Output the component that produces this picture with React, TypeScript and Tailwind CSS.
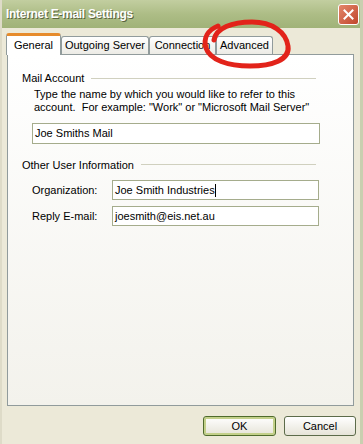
import React from 'react';

const font = { fontFamily: '"Liberation Sans", Arial, sans-serif' };

const Tab = ({ label, width, active = false }: { label: string; width: number; active?: boolean }) => (
  <div
    style={{ width }}
    className={
      active
        ? 'relative z-10 -mb-px h-[22px] bg-white border border-b-0 border-[#919b9c] rounded-t-[3px] border-t-[3px] border-t-[#e68b2c] flex items-center justify-center text-[11px] text-black'
        : 'h-[18px] bg-gradient-to-b from-white to-[#ecebe5] border border-b-0 border-[#919b9c] rounded-t-[3px] flex items-center justify-center text-[11px] text-black'
    }
  >
    {label}
  </div>
);

const Field = ({ value, caret = false, className = '' }: { value: string; caret?: boolean; className?: string }) => (
  <div className={`h-[20px] bg-white border border-[#a5ac8c] flex items-center px-[2px] text-[11px] text-black ${className}`}>
    <span>{value}</span>
    {caret && <span className="w-px h-[13px] bg-black" />}
  </div>
);

const GroupLabel = ({ label }: { label: string }) => (
  <div className="flex items-center gap-[7px] pr-[37px] text-[11px] text-black">
    <span>{label}</span>
    <div className="flex-1 h-px bg-[#d0d0bf]" />
  </div>
);

export default function App() {
  return (
    <div style={font} className="relative w-[363px] h-[444px] bg-[#ece9d8] flex flex-col overflow-hidden border-l-2 border-r-[3px] border-l-[#dedbc8] border-r-[#c9cfb0]">
      {/* Title bar */}
      <div className="h-[28px] shrink-0 bg-gradient-to-b from-[#c2cea0] via-[#adbd86] to-[#a0b278] flex items-center justify-between pl-[4px] pr-[1px]">
        <span className="text-[12px] font-bold text-white tracking-[-0.3px] [text-shadow:1px_1px_0_#5a6440]">
          Internet E-mail Settings
        </span>
        <div className="w-[21px] h-[21px] rounded-[3px] border border-white bg-gradient-to-br from-[#e3866a] to-[#c0452b] flex items-center justify-center">
          <svg width="11" height="11" viewBox="0 0 11 11">
            <path d="M1.5 1.5 L9.5 9.5 M9.5 1.5 L1.5 9.5" stroke="white" strokeWidth="2" strokeLinecap="square" />
          </svg>
        </div>
      </div>

      {/* Tabs */}
      <div className="mt-[5px] ml-[4px] flex items-end">
        <Tab label="General" width={55} active />
        <Tab label="Outgoing Server" width={88} />
        <Tab label="Connection" width={67} />
        <Tab label="Advanced" width={57} />
      </div>

      {/* Panel */}
      <div className="ml-[5px] w-[347px] h-[352px] shrink-0 border border-[#919b9c] bg-gradient-to-b from-white to-[#f3f2ec] pl-[14px] pt-[15px] flex flex-col">
        <GroupLabel label="Mail Account" />
        <div className="mt-[1px] pl-[12px] text-[11px] leading-[13px] text-black">
          <p>Type the name by which you would like to refer to this</p>
          <p>account.&nbsp; For example: "Work" or "Microsoft Mail Server"</p>
        </div>
        <Field value="Joe Smiths Mail" className="mt-[9px] ml-[10px] w-[288px] h-[21px]" />

        <div className="mt-[13px]">
          <GroupLabel label="Other User Information" />
        </div>
        <div className="mt-[7px] ml-[10px] flex items-center">
          <span className="w-[80px] text-[11px] text-black">Organization:</span>
          <Field value="Joe Smith Industries" caret className="w-[207px]" />
        </div>
        <div className="mt-[6px] ml-[10px] flex items-center">
          <span className="w-[80px] text-[11px] text-black">Reply E-mail:</span>
          <Field value="joesmith@eis.net.au" className="w-[207px]" />
        </div>
      </div>

      {/* Buttons */}
      <div className="mt-[10px] pr-[4px] flex justify-end gap-[8px]">
        <button className="w-[73px] h-[20px] rounded-[3px] border border-[#4f6b2c] bg-gradient-to-b from-white to-[#e6e4d8] shadow-[inset_0_0_0_2px_#c3d08a] text-[11px] text-black">
          OK
        </button>
        <button className="w-[72px] h-[20px] rounded-[3px] border border-[#5c6b4a] bg-gradient-to-b from-white to-[#e6e4d8] text-[11px] text-black">
          Cancel
        </button>
      </div>

      {/* Red hand-drawn circle annotation */}
      <svg className="absolute -left-[2px] top-0 pointer-events-none" width="363" height="444">
        <path
          d="M214 40 C216 28 232 22 252 22 C272 22 286 32 288 46 C290 60 272 66 250 66 C228 66 210 60 206 48 C203 38 208 30 218 26"
          fill="none"
          stroke="#e2231a"
          strokeWidth="5"
          strokeLinecap="round"
        />
      </svg>
    </div>
  );
}
